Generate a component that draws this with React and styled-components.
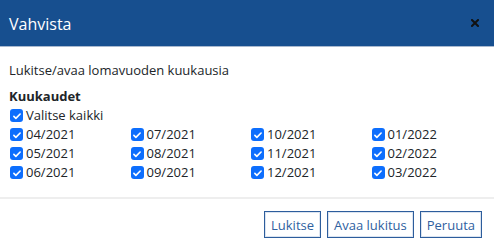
import React from 'react';
import styled, { createGlobalStyle } from 'styled-components';

const GlobalStyle = createGlobalStyle`
  html, body {
    margin: 0;
    padding: 0;
    background: #fff;
  }
  body {
    font-family: 'Open Sans', 'Noto Sans', sans-serif;
    color: #212529;
  }
`;

const Dialog = styled.div`
  width: 494px;
  height: 249px;
  display: flex;
  flex-direction: column;
  background: #fff;
  overflow: hidden;
`;

const Header = styled.header`
  height: 46px;
  flex: none;
  display: flex;
  align-items: center;
  justify-content: space-between;
  padding: 0 12px 0 9px;
  background: #174f8f;
  border-bottom: 1px solid #a9b9cf;
`;

const Title = styled.h5`
  margin: 0;
  font-size: 16px;
  font-weight: 400;
  color: #fff;
  line-height: 22px;
  padding-top: 2px;
`;

const CloseButton = styled.button`
  width: 14px;
  height: 14px;
  padding: 0;
  border: 0;
  background: none;
  display: flex;
  align-items: center;
  justify-content: center;
  cursor: pointer;
`;

const Body = styled.div`
  padding: 14px 9px 14px;
  font-size: 13px;
  line-height: 19px;
`;

const Intro = styled.p`
  margin: 0 0 7px;
`;

const Heading = styled.div`
  font-weight: 700;
`;

const Grid = styled.div`
  display: grid;
  grid-template-columns: repeat(4, 120.5px);
`;

const Option = styled.label`
  display: flex;
  align-items: center;
  height: 19px;
  cursor: pointer;
`;

const Box = styled.span`
  width: 13px;
  height: 13px;
  box-sizing: border-box;
  margin: 0 3px 0 1px;
  border-radius: 3px;
  background: ${(p) => (p.checked ? '#0d6efd' : '#fff')};
  border: ${(p) => (p.checked ? 'none' : '1px solid #adb5bd')};
  display: flex;
  align-items: center;
  justify-content: center;
  flex: none;
`;

const Footer = styled.footer`
  margin-top: auto;
  border-top: 2px solid #eeeeee;
  padding: 12px 12px 11px;
  display: flex;
  justify-content: flex-end;
  gap: 6px;
`;

const Button = styled.button`
  height: 27px;
  padding: 0 6px;
  font-family: inherit;
  font-size: 13px;
  color: #2f5f9f;
  background: #fff;
  border: 1px solid #2d5d9c;
  box-shadow: inset 0 0 0 1px #dbe4f0;
  border-radius: 0;
  cursor: pointer;
`;

const Check = ({ label, checked = true }) => (
  <Option>
    <Box checked={checked}>
      {checked && (
        <svg width="10" height="10" viewBox="0 0 16 16">
          <path d="M3 8.5l3.2 3.2L13 4.8" fill="none" stroke="#fff" strokeWidth="2.6" strokeLinecap="round" strokeLinejoin="round" />
        </svg>
      )}
    </Box>
    {label}
  </Option>
);

const months = [
  '04/2021', '07/2021', '10/2021', '01/2022',
  '05/2021', '08/2021', '11/2021', '02/2022',
  '06/2021', '09/2021', '12/2021', '03/2022',
];

export default function App() {
  return (
    <Dialog>
      <GlobalStyle />
      <Header>
        <Title>Vahvista</Title>
        <CloseButton aria-label="Sulje">
          <svg width="8" height="8" viewBox="0 0 8 8">
            <path d="M1 1l6 6M7 1L1 7" stroke="#111" strokeWidth="2" strokeLinecap="square" />
          </svg>
        </CloseButton>
      </Header>
      <Body>
        <Intro>Lukitse/avaa lomavuoden kuukausia</Intro>
        <Heading>Kuukaudet</Heading>
        <Check label="Valitse kaikki" />
        <Grid>
          {months.map((m) => (
            <Check key={m} label={m} />
          ))}
        </Grid>
      </Body>
      <Footer>
        <Button>Lukitse</Button>
        <Button>Avaa lukitus</Button>
        <Button>Peruuta</Button>
      </Footer>
    </Dialog>
  );
}
